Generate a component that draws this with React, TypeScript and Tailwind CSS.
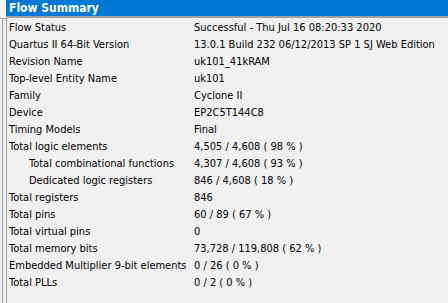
const ROWS: [string, string, boolean?][] = [
  ["Flow Status", "Successful - Thu Jul 16 08:20:33 2020"],
  ["Quartus II 64-Bit Version", "13.0.1 Build 232 06/12/2013 SP 1 SJ Web Edition"],
  ["Revision Name", "uk101_41kRAM"],
  ["Top-level Entity Name", "uk101"],
  ["Family", "Cyclone II"],
  ["Device", "EP2C5T144C8"],
  ["Timing Models", "Final"],
  ["Total logic elements", "4,505 / 4,608 ( 98 % )"],
  ["Total combinational functions", "4,307 / 4,608 ( 93 % )", true],
  ["Dedicated logic registers", "846 / 4,608 ( 18 % )", true],
  ["Total registers", "846"],
  ["Total pins", "60 / 89 ( 67 % )"],
  ["Total virtual pins", "0"],
  ["Total memory bits", "73,728 / 119,808 ( 62 % )"],
  ["Embedded Multiplier 9-bit elements", "0 / 26 ( 0 % )"],
  ["Total PLLs", "0 / 2 ( 0 % )"],
]

export default function App() {
  return (
    <div
      className="flex w-[448px] h-[303px] bg-[#f0f0f0] overflow-hidden text-[11px] text-black"
      style={{ fontFamily: '"DejaVu Sans Condensed", "DejaVu Sans", sans-serif' }}
    >
      {/* left splitter edge */}
      <div className="w-[6px] shrink-0 flex flex-col">
        <div className="h-[19px] bg-[#f7f7f7] border-b border-[#a0a0a0]" />
        <div className="flex-1 flex">
          <div className="w-[2px]" />
          <div className="w-[1px] bg-[#a0a0a0]" />
        </div>
      </div>

      <div className="flex-1 flex flex-col">
        <div className="h-[16px] bg-[#0078d7] text-white font-bold text-[12px] leading-[16px] pl-[3px]">
          Flow Summary
        </div>
        <div className="h-[2px] bg-[#a0a0a0]" />
        <div className="flex-1 border-l border-[#a0a0a0] pt-[1px]">
          {ROWS.map(([label, value, indent], i) => (
            <div key={i} className="flex h-[17px] leading-[17px] whitespace-nowrap">
              <div className={`w-[187px] shrink-0 ${indent ? "pl-[22px]" : "pl-[2px]"}`}>{label}</div>
              <div>{value}</div>
            </div>
          ))}
        </div>
      </div>
    </div>
  )
}
